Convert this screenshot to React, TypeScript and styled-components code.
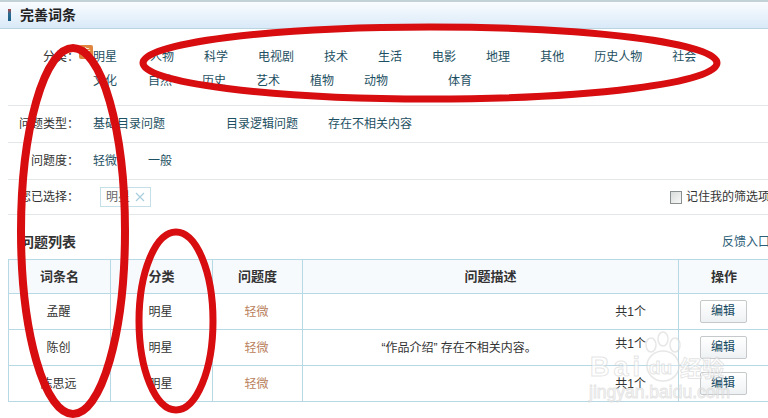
import React from "react";
import styled, { createGlobalStyle } from "styled-components";

const Global = createGlobalStyle`
  html, body { margin: 0; padding: 0; background: #fff; }
  body { font: 12px/24px "Liberation Sans", "Noto Sans CJK SC", sans-serif; color: #333; }
`;

const Page = styled.div`
  position: relative;
  width: 768px;
  height: 418px;
  overflow: hidden;
  background: #fff;
`;
const Inner = styled.div`
  width: 770px;
`;
const TopStrip = styled.div`
  height: 2px;
  background: #c3d2d6;
`;
const Header = styled.header`
  display: flex;
  align-items: center;
  gap: 9px;
  height: 26px;
  padding-left: 8px;
  background: linear-gradient(180deg, #f9fcff 0%, #e8f2fb 55%, #d9e9f8 100%);
  border-bottom: 1px solid #b9d5df;
`;
const HeaderBar = styled.i`
  display: block;
  width: 3px;
  height: 12px;
  background: linear-gradient(180deg, #b0484a 0%, #2a6c92 40%, #1c5f86 100%);
`;
const Title = styled.h1`
  margin: 0;
  font-size: 14px;
  line-height: 26px;
  font-weight: 700;
  color: #222;
`;
const FilterRow = styled.div<{ $pad: string }>`
  display: flex;
  margin-left: 8px;
  padding: ${(p) => p.$pad};
  border-bottom: 1px solid #e4e7e8;
`;
const Label = styled.div`
  flex: none;
  width: 71px;
  margin-right: 14px;
  text-align: right;
  white-space: nowrap;
`;
const Values = styled.div`
  position: relative;
  flex: 1;
  min-width: 0;
`;
const Line = styled.div`
  display: flex;
  white-space: nowrap;
`;
const Option = styled.a<{ $gap: number }>`
  flex: none;
  margin-right: ${(p) => p.$gap}px;
  color: #1d5062;
`;
const HotBadge = styled.span`
  position: absolute;
  left: -14px;
  top: 0;
  width: 14px;
  height: 14px;
  border-radius: 2px;
  background: #e0853f;
  color: #fff;
  font-size: 9px;
  line-height: 14px;
  text-align: center;
`;
const SelectedRow = styled(Line)`
  align-items: center;
`;
const Chip = styled.span`
  display: flex;
  align-items: center;
  box-sizing: border-box;
  width: 51px;
  height: 20px;
  margin-left: 7px;
  padding-left: 5px;
  border: 1px solid #c5dfe8;
  color: #666;
  line-height: 18px;
`;
const ChipClose = styled.svg`
  margin-left: 5px;
  flex: none;
`;
const Remember = styled.label`
  display: flex;
  align-items: center;
  margin-left: auto;
  gap: 4px;
`;
const Checkbox = styled.span`
  display: block;
  box-sizing: border-box;
  width: 12px;
  height: 13px;
  border: 1px solid #8a8f90;
  background: linear-gradient(135deg, #d9dcdc, #f7f7f7);
`;
const ListHead = styled.div`
  display: flex;
  justify-content: space-between;
  align-items: center;
  height: 24px;
  padding: 15px 0 5px 20px;
`;
const ListTitle = styled.h2`
  margin: 0;
  font-size: 14px;
  font-weight: 700;
  line-height: 24px;
  color: #333;
`;
const Feedback = styled.a`
  color: #2c6078;
`;
const Table = styled.table`
  width: 761px;
  margin-left: 8px;
  border-collapse: collapse;
  table-layout: fixed;
  border: 1px solid #b7d9e6;
`;
const Th = styled.th`
  height: 33px;
  padding: 0;
  border: 1px solid #b7d9e6;
  background: #f7fafd;
  font-size: 13px;
  font-weight: 700;
  color: #333;
`;
const Td = styled.td`
  height: 35px;
  padding: 0 2px 0 0;
  border: 1px solid #b7d9e6;
  text-align: center;
`;
const Level = styled.span`
  color: #b9805c;
`;
const DescCell = styled.div`
  display: flex;
  align-items: center;
  height: 35px;
  padding-right: 30px;
`;
const Desc = styled.div`
  flex: 1;
  text-align: center;
`;
const Count = styled.span<{ $lift: boolean }>`
  flex: none;
  margin-bottom: ${(p) => (p.$lift ? 8 : 0)}px;
`;
const EditButton = styled.button`
  display: block;
  box-sizing: border-box;
  width: 47px;
  height: 23px;
  margin: 0 auto;
  padding: 0;
  border: 1px solid #c6c9ca;
  border-radius: 2px;
  background: linear-gradient(180deg, #ffffff, #eef1f3);
  color: #15495f;
  font: inherit;
  line-height: 21px;
`;
const Watermark = styled.svg`
  position: absolute;
  left: 585px;
  top: 330px;
  pointer-events: none;
`;
const Annotations = styled.svg`
  position: absolute;
  left: 0;
  top: 0;
  pointer-events: none;
`;

const categoryLines = [
  [["明星", 33], ["人物", 30], ["科学", 30], ["电视剧", 30], ["技术", 30], ["生活", 30], ["电影", 30], ["地理", 30], ["其他", 30], ["历史人物", 30], ["社会", 30]],
  [["文化", 31], ["自然", 30], ["历史", 30], ["艺术", 30], ["植物", 30], ["动物", 60], ["体育", 0]],
] as [string, number][][];

const rows = [
  { name: "孟醒", desc: "" },
  { name: "陈创", desc: "“作品介绍” 存在不相关内容。" },
  { name: "陈思远", desc: "" },
];

export default function App() {
  return (
    <Page>
      <Global />
      <Inner>
        <TopStrip />
        <Header>
          <HeaderBar />
          <Title>完善词条</Title>
        </Header>
        <FilterRow $pad="16px 0 12px">
          <Label>分类：</Label>
          <Values>
            <HotBadge>卡</HotBadge>
            {categoryLines.map((line, i) => (
              <Line key={i}>
                {line.map(([label, gap]) => (
                  <Option key={label} $gap={gap}>{label}</Option>
                ))}
              </Line>
            ))}
          </Values>
        </FilterRow>
        <FilterRow $pad="6px 0">
          <Label>问题类型：</Label>
          <Values>
            <Line>
              <Option $gap={61}>基础目录问题</Option>
              <Option $gap={30}>目录逻辑问题</Option>
              <Option $gap={0}>存在不相关内容</Option>
            </Line>
          </Values>
        </FilterRow>
        <FilterRow $pad="6px 0">
          <Label>问题度：</Label>
          <Values>
            <Line>
              <Option $gap={31}>轻微</Option>
              <Option $gap={0}>一般</Option>
            </Line>
          </Values>
        </FilterRow>
        <FilterRow $pad="5px 0">
          <Label>您已选择：</Label>
          <Values>
            <SelectedRow>
              <Chip>
                明星
                <ChipClose width="10" height="10" viewBox="0 0 10 10">
                  <path d="M1 1 L9 9 M9 1 L1 9" stroke="#a9cfdc" strokeWidth="1.2" fill="none" />
                </ChipClose>
              </Chip>
              <Remember>
                <Checkbox />
                记住我的筛选项
              </Remember>
            </SelectedRow>
          </Values>
        </FilterRow>
        <ListHead>
          <ListTitle>问题列表</ListTitle>
          <Feedback>反馈入口</Feedback>
        </ListHead>
        <Table>
          <colgroup>
            <col width="102" />
            <col width="102" />
            <col width="90" />
            <col width="376" />
            <col width="91" />
          </colgroup>
          <thead>
            <tr>
              <Th>词条名</Th>
              <Th>分类</Th>
              <Th>问题度</Th>
              <Th>问题描述</Th>
              <Th>操作</Th>
            </tr>
          </thead>
          <tbody>
            {rows.map((r) => (
              <tr key={r.name}>
                <Td>{r.name}</Td>
                <Td>明星</Td>
                <Td><Level>轻微</Level></Td>
                <Td>
                  <DescCell>
                    <Desc>{r.desc}</Desc>
                    <Count $lift={r.desc !== ""}>共1个</Count>
                  </DescCell>
                </Td>
                <Td><EditButton>编辑</EditButton></Td>
              </tr>
            ))}
          </tbody>
        </Table>
      </Inner>

      <Watermark width="150" height="80" viewBox="0 0 150 80">
        <g fill="#ffffff" fillOpacity="0.3" stroke="#cfcfcf" strokeOpacity="0.5" strokeWidth="1.5">
          <ellipse cx="66" cy="15" rx="5" ry="7" />
          <ellipse cx="78" cy="9" rx="5" ry="7" />
          <ellipse cx="90" cy="15" rx="5" ry="7" />
          <ellipse cx="78" cy="36" rx="16" ry="15" />
        </g>
        <g fill="#ffffff" fillOpacity="0.55" stroke="#c4c4c4" strokeOpacity="0.45" strokeWidth="1">
          <text x="5" y="46" letterSpacing="4" fontFamily="'Liberation Sans', sans-serif" fontSize="27" fontWeight="700">Bai</text>
          <text x="64" y="44" fontFamily="'Liberation Sans', sans-serif" fontSize="19" fontWeight="700">du</text>
          <text x="95" y="46" fontFamily="'Noto Sans CJK SC', sans-serif" fontSize="22" fontWeight="700">经验</text>
          <text x="4" y="68" fontFamily="'Liberation Sans', sans-serif" fontSize="17.5">jingyan.baidu.com</text>
        </g>
      </Watermark>

      <Annotations width="768" height="418" viewBox="0 0 768 418">
        <g fill="none" stroke="#d70d10">
          <ellipse cx="430" cy="63" rx="287" ry="36" strokeWidth="7" />
          <ellipse cx="73" cy="231" rx="52" ry="183" strokeWidth="8" />
          <ellipse cx="176" cy="321" rx="37" ry="89" strokeWidth="7" />
        </g>
      </Annotations>
    </Page>
  );
}
